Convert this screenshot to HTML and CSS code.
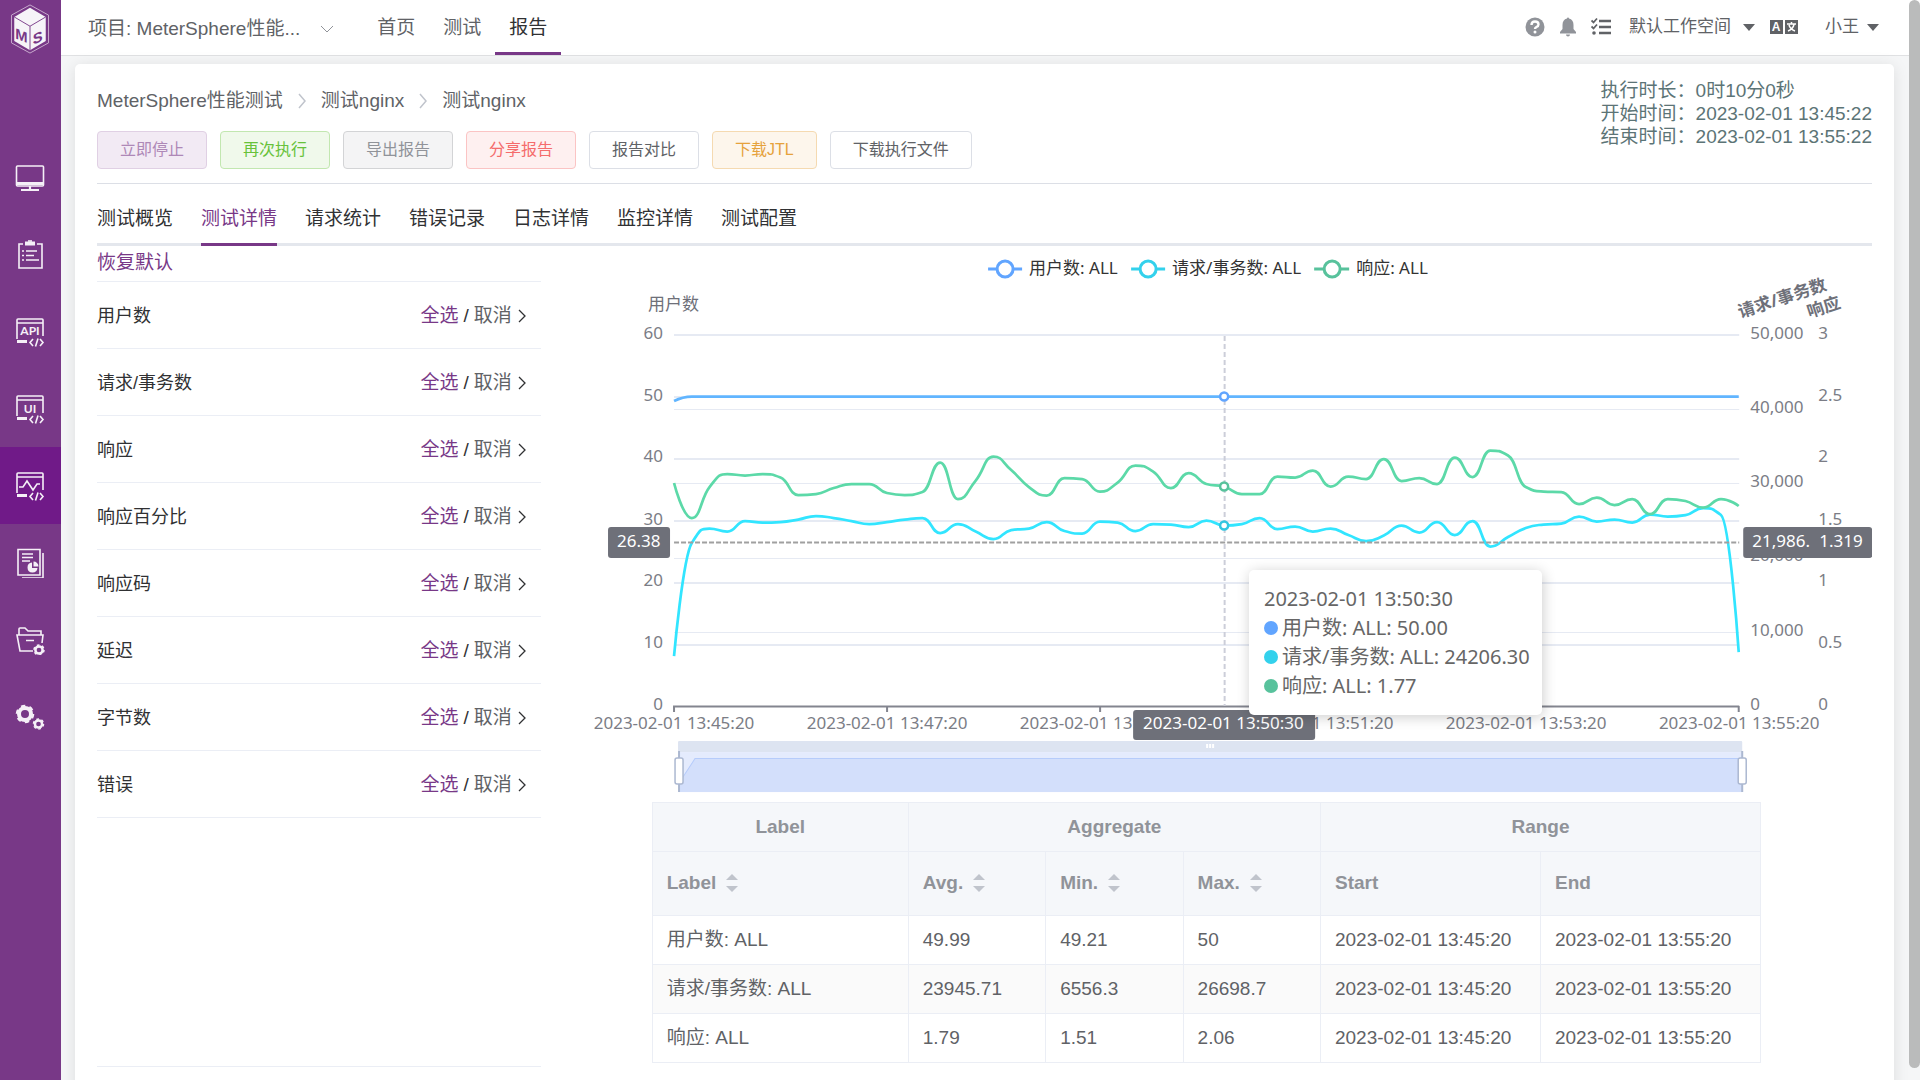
FILE: index.html
```html
<!DOCTYPE html>
<html lang="zh-CN">
<head>
	<meta charset="UTF-8">
	<meta name="viewport" content="width=device-width, initial-scale=1">
	<title>MeterSphere</title>
	<link rel="stylesheet" href="styles.css">
</head>
<body>
	<aside class="sidebar">
		<a class="logo" href="#" aria-label="MeterSphere">
			<svg width="42" height="50" viewBox="0 0 42 54">
				<path d="M21 1L41 12V42L21 53L1 42V12Z" fill="none" stroke="#cdb2d3" stroke-width="1"/>
				<path d="M21 4L38 14V40L21 50L4 40V14Z" fill="#f6f4f8"/>
				<path d="M4 14L21 24L38 14M21 24V50" fill="none" stroke="#783887" stroke-width="1"/>
				<text class="logo-text" transform="translate(5 37) skewY(22)">M</text>
				<text class="logo-text" transform="translate(24 44) skewY(-22)">S</text>
			</svg>
		</a>
		<nav class="side-nav">
			<a href="#" aria-label="工作台">
				<svg viewBox="0 0 30 30"><rect x="1.500" y="3" width="27" height="20" rx="1"/><path d="M2 20.500H28" stroke-width="3"/><path d="M15 23V26M6 27H24" stroke-width="2.200"/></svg>
			</a>
			<a href="#" aria-label="测试跟踪">
				<svg viewBox="0 0 30 30"><path d="M8 4H4V28H27V4H22"/><path d="M10 3.500H20" stroke-width="4"/><path d="M13 1H17"/><path d="M7 11H9M11 11H22M7 15.500H9M11 15.500H19M7 20H9M11 20H24"/></svg>
			</a>
			<a href="#" aria-label="接口测试">
				<svg viewBox="0 0 30 30"><path d="M2 22V3Q2 2 3 2H27Q28 2 28 3V19M2 6H28"/><path d="M2 24.500H12" stroke-width="3"/><path d="M18 22L15 25.500L18 29M25 22L28 25.500L25 29M23 21.500L20.500 29.500"/><text class="icon-text" x="15" y="18">API</text></svg>
			</a>
			<a href="#" aria-label="UI测试">
				<svg viewBox="0 0 30 30"><path d="M2 22V3Q2 2 3 2H27Q28 2 28 3V19M2 6H28"/><path d="M2 24.500H12" stroke-width="3"/><path d="M18 22L15 25.500L18 29M25 22L28 25.500L25 29M23 21.500L20.500 29.500"/><text class="icon-text" x="15" y="19">UI</text></svg>
			</a>
			<a class="current" href="#" aria-label="性能测试">
				<svg viewBox="0 0 30 30"><path d="M2 22V3Q2 2 3 2H27Q28 2 28 3V19M2 6H28"/><path d="M2 24.500H12" stroke-width="3"/><path d="M18 22L15 25.500L18 29M25 22L28 25.500L25 29M23 21.500L20.500 29.500M4 16H8L12 10L18 19L22 13H25"/></svg>
			</a>
			<a href="#" aria-label="报表统计">
				<svg viewBox="0 0 30 30"><path d="M3 1.500H25V27H3ZM28 5V30H7"/><path d="M7 6H18M7 9.500H18M7 13H15"/><path class="solid" d="M17 14.500V20H22.500A5 5 0 1 1 17 14.500ZM18.500 13.500A5 5 0 0 1 23.500 18.500H18.500Z"/></svg>
			</a>
			<a href="#" aria-label="项目设置">
				<svg viewBox="0 0 30 30"><path d="M4 10V4Q4 3 5 3H10L13 6H26V10M18 26H5L2 10H28L27 18M11 15.500H19"/><circle cx="24" cy="25" r="3.600" stroke-width="2.500"/><circle cx="24" cy="25" r="5" stroke-width="1.500" stroke-dasharray="2.600"/></svg>
			</a>
			<a href="#" aria-label="系统设置">
				<svg viewBox="0 0 30 30"><circle cx="10" cy="12" r="6" stroke-width="4"/><circle cx="10" cy="12" r="8.300" stroke-width="2" stroke-dasharray="4.350"/><circle cx="23.500" cy="22" r="3.600" stroke-width="2.500"/><circle cx="23.500" cy="22" r="5" stroke-width="1.500" stroke-dasharray="2.600"/></svg>
			</a>
		</nav>
	</aside>

	<div class="main">
		<header class="header">
			<button class="project" type="button">
				<span>项目: MeterSphere性能...</span>
				<svg width="14" height="8" viewBox="0 0 14 8"><path d="M1 1L7 7L13 1"/></svg>
			</button>
			<nav class="top-nav">
				<a href="#">首页</a>
				<a href="#">测试</a>
				<a class="current" href="#">报告</a>
			</nav>
			<div class="tools">
				<button type="button" aria-label="帮助">
					<svg width="20" height="20" viewBox="0 0 20 20"><circle cx="10" cy="10" r="9.500" fill="#909399"/><path d="M6.500 8Q6.500 4.500 10 4.500T13.500 7.500Q13.500 9 11.500 10Q10 10.800 10 12" fill="none" stroke="#fff" stroke-width="2.400"/><circle cx="10" cy="15" r="1.500" fill="#fff"/></svg>
				</button>
				<button type="button" aria-label="通知">
					<svg width="18" height="20" viewBox="0 0 18 20"><path d="M8 1.500Q8 .5 9 .5T10 1.500Q14.500 2.500 14.500 8V12L17 15V16.500H1V15L3.500 12V8Q3.500 2.500 8 1.500ZM7 17.500H11Q11 19.500 9 19.500T7 17.500Z" fill="#909399"/></svg>
				</button>
				<button type="button" aria-label="任务">
					<svg width="20" height="20" viewBox="0 0 20 20"><path d="M8 4H20M8 10H20M8 16H20" stroke="#606266" stroke-width="2.400"/><path d="M.5 3.500L2.500 5.500L6 1.500M.5 9.500L2.500 11.500L6 7.500" fill="none" stroke="#606266" stroke-width="1.800"/><circle cx="3" cy="16" r="1.800" fill="#606266"/></svg>
				</button>
				<button class="menu" type="button">默认工作空间<i class="caret"></i></button>
				<button type="button" aria-label="语言">
					<svg width="30" height="16" viewBox="0 0 30 16"><path d="M1 1H14V15H1ZM16 1H29V15H16Z" fill="#606266"/><text class="lang-text" x="7" y="12">A</text><path d="M18 5H27M22.500 3V5M19 12Q24 10 25 5.500M20 6Q21 10 26 12" fill="none" stroke="#fff" stroke-width="1.500"/></svg>
				</button>
				<button class="menu user" type="button">小王<i class="caret"></i></button>
			</div>
		</header>

		<main class="card">
			<div class="card-head">
				<div>
					<nav class="crumbs">
						<a href="#">MeterSphere性能测试</a>
						<svg width="8" height="16" viewBox="0 0 8 16"><path d="M1 1L7 8L1 15"/></svg>
						<a href="#">测试nginx</a>
						<svg width="8" height="16" viewBox="0 0 8 16"><path d="M1 1L7 8L1 15"/></svg>
						<a href="#">测试nginx</a>
					</nav>
					<div class="btns">
						<button class="primary" type="button" disabled>立即停止</button>
						<button class="success" type="button">再次执行</button>
						<button class="info" type="button">导出报告</button>
						<button class="danger" type="button">分享报告</button>
						<button type="button">报告对比</button>
						<button class="warning" type="button">下载JTL</button>
						<button type="button">下载执行文件</button>
					</div>
				</div>
				<div class="times">
					<div>执行时长：0时10分0秒</div>
					<div>开始时间：2023-02-01 13:45:22</div>
					<div>结束时间：2023-02-01 13:55:22</div>
				</div>
			</div>

			<nav class="tabs">
				<a href="#">测试概览</a>
				<a class="current" href="#">测试详情</a>
				<a href="#">请求统计</a>
				<a href="#">错误记录</a>
				<a href="#">日志详情</a>
				<a href="#">监控详情</a>
				<a href="#">测试配置</a>
			</nav>

			<div class="detail">
				<section class="options">
					<a class="reset" href="#">恢复默认</a>
					<ul>
						<li><span>用户数</span><span class="pick"><a href="#">全选</a> / <a class="cancel" href="#">取消</a><svg width="10" height="16" viewBox="0 0 10 16"><path d="M2 2L8 8L2 14"/></svg></span></li>
						<li><span>请求/事务数</span><span class="pick"><a href="#">全选</a> / <a class="cancel" href="#">取消</a><svg width="10" height="16" viewBox="0 0 10 16"><path d="M2 2L8 8L2 14"/></svg></span></li>
						<li><span>响应</span><span class="pick"><a href="#">全选</a> / <a class="cancel" href="#">取消</a><svg width="10" height="16" viewBox="0 0 10 16"><path d="M2 2L8 8L2 14"/></svg></span></li>
						<li><span>响应百分比</span><span class="pick"><a href="#">全选</a> / <a class="cancel" href="#">取消</a><svg width="10" height="16" viewBox="0 0 10 16"><path d="M2 2L8 8L2 14"/></svg></span></li>
						<li><span>响应码</span><span class="pick"><a href="#">全选</a> / <a class="cancel" href="#">取消</a><svg width="10" height="16" viewBox="0 0 10 16"><path d="M2 2L8 8L2 14"/></svg></span></li>
						<li><span>延迟</span><span class="pick"><a href="#">全选</a> / <a class="cancel" href="#">取消</a><svg width="10" height="16" viewBox="0 0 10 16"><path d="M2 2L8 8L2 14"/></svg></span></li>
						<li><span>字节数</span><span class="pick"><a href="#">全选</a> / <a class="cancel" href="#">取消</a><svg width="10" height="16" viewBox="0 0 10 16"><path d="M2 2L8 8L2 14"/></svg></span></li>
						<li><span>错误</span><span class="pick"><a href="#">全选</a> / <a class="cancel" href="#">取消</a><svg width="10" height="16" viewBox="0 0 10 16"><path d="M2 2L8 8L2 14"/></svg></span></li>
					</ul>
				</section>

				<section class="result">
					<div class="chart">
						<svg viewBox="541 246 1331 556">
							<!-- legend -->
							<g fill="#fff" stroke-width="3">
								<g stroke="#61a5ff"><path d="M988 269H1022"/><circle cx="1005" cy="269" r="8"/></g>
								<g stroke="#33d1ec"><path d="M1131 269H1165"/><circle cx="1148" cy="269" r="8"/></g>
								<g stroke="#58c29c"><path d="M1314 269H1349"/><circle cx="1332" cy="269" r="8"/></g>
							</g>
							<g class="legend">
								<text x="1029" y="274">用户数: ALL</text>
								<text x="1172" y="274">请求/事务数: ALL</text>
								<text x="1356" y="274">响应: ALL</text>
							</g>
							<g class="axis-name">
								<text x="648" y="310">用户数</text>
								<text class="bold" transform="translate(1740 318) rotate(-18)">请求/事务数</text>
								<text class="bold" transform="translate(1809 318) rotate(-18)">响应</text>
							</g>

							<!-- grid -->
							<path class="grid" d="M674 335H1739M674 397H1739M674 459H1739M674 521H1739M674 583H1739M674 645H1739"/>
							<path class="grid thin" d="M674 409.500H1739M674 483.500H1739M674 558.500H1739M674 632.500H1739"/>
							<path class="axis" d="M673 706.500H1739M674 706V712M887 706V712M1100 706V712M1313 706V712M1526 706V712M1738.500 706V712"/>

							<g class="label end">
								<text x="663" y="339">60</text>
								<text x="663" y="401">50</text>
								<text x="663" y="462">40</text>
								<text x="663" y="525">30</text>
								<text x="663" y="586">20</text>
								<text x="663" y="648">10</text>
								<text x="663" y="710">0</text>
							</g>
							<g class="label">
								<text x="1750" y="339">50,000</text>
								<text x="1750" y="413">40,000</text>
								<text x="1750" y="487">30,000</text>
								<text x="1750" y="561">20,000</text>
								<text x="1750" y="636">10,000</text>
								<text x="1750" y="710">0</text>
								<text x="1818" y="339">3</text>
								<text x="1818" y="401">2.5</text>
								<text x="1818" y="462">2</text>
								<text x="1818" y="525">1.5</text>
								<text x="1818" y="586">1</text>
								<text x="1818" y="648">0.5</text>
								<text x="1818" y="710">0</text>
							</g>
							<g class="label middle">
								<text x="674" y="729">2023-02-01 13:45:20</text>
								<text x="887" y="729">2023-02-01 13:47:20</text>
								<text x="1100" y="729">2023-02-01 13:49:20</text>
								<text x="1313" y="729">2023-02-01 13:51:20</text>
								<text x="1526" y="729">2023-02-01 13:53:20</text>
								<text x="1739" y="729">2023-02-01 13:55:20</text>
							</g>

							<!-- series, drawn by chart.js -->
							<path id="users" class="line" stroke="#61b5ff"/>
							<path id="hits" class="line" stroke="#32e5ff"/>
							<path id="response" class="line" stroke="#5cd9a8"/>

							<!-- pointer -->
							<path d="M1224.500 336V706" stroke="#ccced9" stroke-width="2" stroke-dasharray="5 3"/>
							<path d="M674 542.500H1739" stroke="#a0a0a0" stroke-width="2" stroke-dasharray="5 2"/>
							<g fill="#fff" stroke-width="2.500">
								<circle cx="1224" cy="396.500" r="4" stroke="#61a5ff"/>
								<circle cx="1224" cy="486.500" r="4" stroke="#58c29c"/>
								<circle cx="1224" cy="525.500" r="4" stroke="#33c6e0"/>
							</g>
							<g fill="#6e7079">
								<rect x="608" y="527" width="62" height="31" rx="3"/>
								<rect x="1743" y="527" width="129" height="31" rx="3"/>
								<rect x="1133" y="710" width="182" height="30" rx="3"/>
							</g>
							<g class="label light">
								<text x="617" y="547">26.38</text>
								<text x="1752" y="547">21,986.</text>
								<text x="1819" y="547">1.319</text>
								<text x="1143" y="729">2023-02-01 13:50:30</text>
							</g>

							<!-- data zoom -->
							<rect x="678" y="741" width="1064" height="11" rx="1" fill="#dde4f1"/>
							<rect x="678" y="752" width="1064" height="40" fill="#e4ebfd"/>
							<path d="M679 792V783L695 758H1742V792Z" fill="#d3dffb"/>
							<path d="M679 783L695 758.500H1742" fill="none" stroke="#b6ccfb"/>
							<path d="M1207 744V748M1210 744V748M1213 744V748" stroke="#fff" stroke-width="2"/>
							<path d="M679 751V792M1742 751V792" stroke="#acb8d1" stroke-width="2"/>
							<rect x="675" y="758" width="8" height="26" rx="2" fill="#fff" stroke="#acb8d1" stroke-width="1.500"/>
							<rect x="1738" y="758" width="8" height="26" rx="2" fill="#fff" stroke="#acb8d1" stroke-width="1.500"/>
						</svg>
						<div class="tooltip">
							<div>2023-02-01 13:50:30</div>
							<div><i class="dot blue"></i>用户数: ALL: 50.00</div>
							<div><i class="dot cyan"></i>请求/事务数: ALL: 24206.30</div>
							<div><i class="dot green"></i>响应: ALL: 1.77</div>
						</div>
					</div>

					<table>
						<colgroup>
							<col class="col-label"><col class="col-num"><col class="col-num"><col class="col-num"><col class="col-time"><col class="col-time">
						</colgroup>
						<thead>
							<tr class="group">
								<th>Label</th>
								<th colspan="3">Aggregate</th>
								<th colspan="2">Range</th>
							</tr>
							<tr class="fields">
								<th><button type="button">Label<i class="sort"></i></button></th>
								<th><button type="button">Avg.<i class="sort"></i></button></th>
								<th><button type="button">Min.<i class="sort"></i></button></th>
								<th><button type="button">Max.<i class="sort"></i></button></th>
								<th>Start</th>
								<th>End</th>
							</tr>
						</thead>
						<tbody>
							<tr><td>用户数: ALL</td><td>49.99</td><td>49.21</td><td>50</td><td>2023-02-01 13:45:20</td><td>2023-02-01 13:55:20</td></tr>
							<tr><td>请求/事务数: ALL</td><td>23945.71</td><td>6556.3</td><td>26698.7</td><td>2023-02-01 13:45:20</td><td>2023-02-01 13:55:20</td></tr>
							<tr><td>响应: ALL</td><td>1.79</td><td>1.51</td><td>2.06</td><td>2023-02-01 13:45:20</td><td>2023-02-01 13:55:20</td></tr>
						</tbody>
					</table>
				</section>
			</div>
		</main>
	</div>
	<div class="scrollbar"></div>
	<script src="chart.js"></script>
</body>
</html>
```
FILE: styles.css
```css
/*css reset*/
*{box-sizing: border-box;}
html,body,ul,li{
	padding: 0;
	margin: 0;
}
ul{list-style-type: none;}
a{
	color: inherit;
	text-decoration: none;
}
button{
	padding: 0;
	border: 0;
	background: none;
	color: inherit;
	font: inherit;
	cursor: pointer;
}
body{
	display: flex;
	height: 100vh;
	overflow: hidden;
	background: #f5f6f7;
	color: #606266;
	font: 19px/22px "Liberation Sans", "Noto Sans CJK SC", sans-serif;
}

/*sidebar*/
.sidebar{
	flex: none;
	width: 61px;
	background: #783887;
}
.logo{
	display: block;
	height: 139px;
	padding: 4px 9px;
}
.logo-text{
	fill: #783887;
	font: bold 16px "Liberation Sans", sans-serif;
}
.side-nav a{
	display: flex;
	align-items: center;
	justify-content: center;
	height: 77px;
	padding-right: 2px;
}
.side-nav a.current{background: #701a88;}
.side-nav svg{
	width: 30px;
	height: 30px;
	fill: none;
	stroke: #f5f0f7;
	stroke-width: 1.6;
}
.side-nav .solid{
	fill: #f5f0f7;
	stroke: none;
}
.icon-text{
	fill: #f5f0f7;
	stroke: none;
	font: bold 12px Lato, sans-serif;
	text-anchor: middle;
}

/*header*/
.main{
	flex: 1;
	min-width: 0;
	padding-right: 11px;
}
.header{
	display: flex;
	height: 56px;
	margin-right: -11px;
	padding: 0 41px 0 27px;
	border-bottom: 1px solid #e0e1e3;
	background: #fff;
}
.project{
	display: flex;
	align-items: center;
	gap: 20px;
	margin-right: 29px;
	padding-top: 2px;
}
.project svg{
	fill: none;
	stroke: #909399;
}
.top-nav{display: flex;}
.top-nav a{
	height: 55px;
	padding: 0 14px;
	line-height: 56px;
}
.top-nav a.current{
	border-bottom: 3px solid #783887;
	color: #303133;
}
.tools{
	display: flex;
	align-items: center;
	gap: 14px;
	height: 54px;
	margin-left: auto;
}
.tools svg{display: block;}
.menu{
	display: flex;
	align-items: center;
	gap: 12px;
	margin-left: 4px;
	font-size: 17px;
}
.user{
	gap: 8px;
	margin-left: 12px;
}
.caret{
	border: 6px solid transparent;
	border-top: 7px solid #606266;
	border-bottom: 0;
}
.lang-text{
	fill: #fff;
	font: bold 12px "Liberation Sans", sans-serif;
	text-anchor: middle;
}

/*card*/
.card{
	min-height: 100vh;
	margin: 8px 15px 0 14px;
	padding: 15px 22px;
	border-radius: 5px;
	background: #fff;
	box-shadow: 0 2px 16px rgba(0,0,0,.1);
}
.card-head{
	display: flex;
	justify-content: space-between;
	padding-bottom: 14px;
	border-bottom: 1px solid #dcdfe6;
}
.crumbs{
	display: flex;
	align-items: center;
	gap: 15px;
	padding-top: 11px;
}
.crumbs svg{
	fill: none;
	stroke: #c0c4cc;
	stroke-width: 1.5;
}
.btns{
	display: flex;
	gap: 13px;
	margin-top: 19px;
}
.btns button{
	height: 38px;
	padding: 0 22px;
	border: 1px solid #dcdfe6;
	border-radius: 4px;
	font-size: 16px;
}
.btns .primary{
	border-color: #e0d0e4;
	background: #f2eaf4;
	color: #ae88b7;
}
.btns .success{
	border-color: #c2e7b0;
	background: #f0f9eb;
	color: #67c23a;
}
.btns .info{
	border-color: #d3d4d6;
	background: #f4f4f5;
	color: #909399;
}
.btns .danger{
	border-color: #fbc4c4;
	background: #fef0f0;
	color: #f56c6c;
}
.btns .warning{
	border-color: #f5dab1;
	background: #fdf6ec;
	color: #e6a23c;
}
.times{
	color: #5c7476;
	line-height: 23px;
}
.tabs{
	display: flex;
	gap: 28px;
	margin-top: 10px;
	border-bottom: 3px solid #e4e7ed;
	color: #303133;
	line-height: 49px;
}
.tabs a{
	margin-bottom: -3px;
	border-bottom: 3px solid transparent;
}
.tabs a.current{
	border-bottom-color: #783887;
	color: #783887;
}

/*options*/
.detail{
	display: grid;
	grid-template-columns: 1fr 3fr;
}
.options{border-bottom: 1px solid #ebeef5;}
.reset{
	display: block;
	padding: 2px 0 3px;
	border-bottom: 1px solid #ebeef5;
	color: #783887;
	line-height: 30px;
}
.options li{
	display: flex;
	align-items: center;
	justify-content: space-between;
	height: 67px;
	padding: 2px 14px 0 0;
	border-bottom: 1px solid #ebeef5;
	color: #303133;
	font-size: 18px;
}
.pick{
	display: flex;
	align-items: center;
	gap: 5px;
	font-size: 19px;
}
.pick a{color: #783887;}
.pick .cancel{color: #606266;}
.pick svg{
	fill: none;
	stroke: #303133;
	stroke-width: 1.3;
}

/*chart*/
.result{
	min-width: 0;
	padding-bottom: 4px;
}
.chart{
	position: relative;
	font-family: "Noto Sans", "Noto Sans CJK SC", sans-serif;
}
.chart svg{
	display: block;
	width: 100%;
	font-size: 17px;
}
.legend{fill: #333;}
.axis-name{fill: #6e7079;}
.bold{font-weight: bold;}
.label{fill: #7b7d86;}
.end{text-anchor: end;}
.middle{text-anchor: middle;}
.light{fill: #fff;}
.grid{
	stroke: #e6eaf3;
	stroke-width: 2;
}
.thin{stroke-width: 1;}
.axis{
	fill: none;
	stroke: #83858f;
	stroke-width: 2;
}
.line{
	fill: none;
	stroke-width: 2.7;
}
.tooltip{
	position: absolute;
	top: 58.2%;
	left: 53.2%;
	padding: 14px 12px 15px 15px;
	border-radius: 5px;
	background: #fff;
	box-shadow: 1px 2px 14px rgba(0,0,0,.2);
	color: #666;
	font-size: 20px;
	line-height: 29px;
	white-space: nowrap;
}
.dot{
	display: inline-block;
	width: 14px;
	height: 14px;
	margin-right: 4px;
	border-radius: 50%;
}
.blue{background: #61a5ff;}
.cyan{background: #33d1ec;}
.green{background: #58c29c;}

/*table*/
table{
	width: 83.333%;
	margin: 0 auto;
	border: 1px solid #ebeef5;
	border-collapse: collapse;
	table-layout: fixed;
}
.col-label{width: 23.1%;}
.col-num{width: 12.4%;}
.col-time{width: 19.85%;}
th,td{
	height: 49px;
	padding: 0 14px;
	border: 1px solid #ebeef5;
	text-align: left;
	white-space: nowrap;
}
th{
	background: #f5f7fa;
	color: #909399;
}
.group th{text-align: center;}
.fields th{
	height: 64px;
	padding-bottom: 2px;
}
th button{
	display: flex;
	align-items: center;
	gap: 10px;
}
.sort:before,.sort:after{
	display: block;
	border: 6px solid transparent;
	content: "";
}
.sort:before{
	margin-bottom: 6px;
	border-top: 0;
	border-bottom-color: #c0c4cc;
}
.sort:after{
	border-bottom: 0;
	border-top-color: #c0c4cc;
}
tbody tr:nth-child(2){background: #fafafa;}

.scrollbar{
	position: fixed;
	top: 0;
	right: 0;
	bottom: 12px;
	width: 11px;
	border-radius: 6px;
	background: #babbbb;
}
```
FILE: chart.js
```javascript
// one point every 10 seconds, y in chart units
var left=674;
var right=1738.5;
var users=[401,396.5];
for(var i=2;i<=60;i++){
	users.push(396.5);
}
var hits=[656,543,528.5,531.5,521,522.5,522,519.5,516,518,521,524,522,519.5,518,533,524,531.5,539,530,
	528.5,522,531,533.5,521.5,522.5,531,524,524.5,527,520.5,525.5,524,518,529,526.5,531.5,528.5,535,541,
	535.5,525.5,532.5,522,535,521,546.5,537,528,524.5,523.5,516.5,521.5,519.5,522.5,514.5,516.5,515,508,515,652];
var response=[483,518,487,474,475.5,474,477.5,495,494,488,484,484,493,495,492,462.5,499,480.5,456.5,470,
	487,495.5,478,479,491.5,482.5,465.5,471.5,488,473,484,486.5,494,494,476.5,477.5,470.5,486.5,476.5,479,
	459,481,478,484,457.5,477,450.5,455.5,487,491.5,492,504,497.5,505,499,514,499,501,507.5,499,506];

function clamp(v,a,b){
	return Math.min(Math.max(v,Math.min(a,b)),Math.max(a,b));
}

// smooth curve that never leaves the range of two neighbours
function smoothPath(data){
	var step=(right-left)/(data.length-1);
	var last=data.length-1;
	var d="M"+left+" "+data[0];
	var outX=left;
	var outY=data[0];
	for(var i=1;i<=last;i++){
		var x=left+step*i;
		var y=data[i];
		var inX=x;
		var inY=y;
		var nextX=x;
		var nextY=y;
		if(i<last){
			var dy=(data[i+1]-data[i-1])*0.25;
			nextY=clamp(y+dy,y,data[i+1]);
			inY=clamp(y*2-nextY,y,data[i-1]);
			nextY=y*2-inY;
			inX=x-step/2;
			nextX=x+step/2;
		}
		d+="C"+outX+" "+outY+" "+inX+" "+inY+" "+x+" "+y;
		outX=nextX;
		outY=nextY;
	}
	return d;
}

document.getElementById("users").setAttribute("d",smoothPath(users));
document.getElementById("hits").setAttribute("d",smoothPath(hits));
document.getElementById("response").setAttribute("d",smoothPath(response));
```
